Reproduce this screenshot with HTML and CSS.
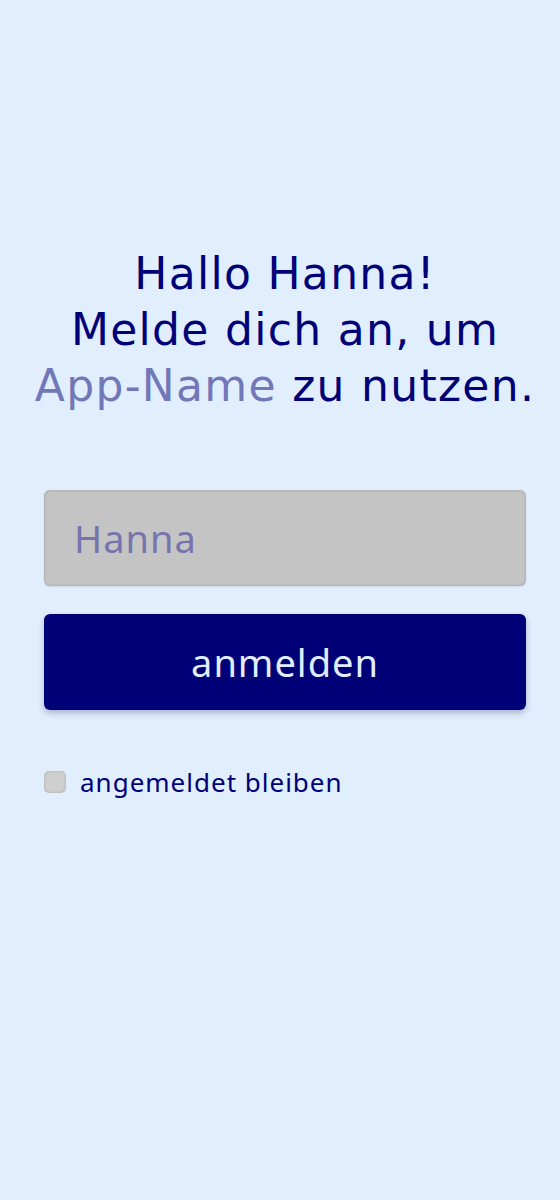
FILE: index.html
```html
<!DOCTYPE html>
<html lang="de">
<head>
<meta charset="utf-8">
<link rel="stylesheet" href="styles.css">
</head>
<body>
<main class="login">
  <h1 class="greeting">Hallo Hanna!<br>Melde dich an, um<br><span class="app">App-Name</span> zu nutzen.</h1>
  <form class="form">
    <input class="name" type="text" placeholder="Hanna">
    <button class="submit" type="button">anmelden</button>
    <label class="remember"><span class="box"></span><span>angemeldet bleiben</span></label>
  </form>
</main>
</body>
</html>
```
FILE: styles.css
```css
html, body {
  margin: 0;
  padding: 0;
  background: #e1eefe;
  height: 100%;
}
body {
  font-family: "Noto Sans", "Open Sans", sans-serif;
  color: #000077;
  letter-spacing: 1px;
}
.login {
  display: flex;
  flex-direction: column;
  padding: 246px 34px 0 44px;
}
.greeting {
  margin: 0 -30px 0 -30px;
  text-align: center;
  font-family: "DejaVu Sans", sans-serif;
  font-weight: 400;
  font-size: 44px;
  letter-spacing: 1.3px;
  line-height: 56px;
  color: #000077;
}
.app {
  color: #7277b8;
}
.form {
  display: flex;
  flex-direction: column;
  margin-top: 76px;
}
.name {
  box-sizing: border-box;
  height: 96px;
  border: none;
  border-radius: 6px;
  background: #c4c4c4;
  box-shadow: inset 0 0 3px rgba(0,0,0,0.2), 0 1px 2px rgba(0,0,0,0.1);
  padding: 0 30px;
  font-family: inherit;
  font-size: 38px;
  letter-spacing: 1px;
  color: #000077;
  outline: none;
}
.name::placeholder {
  color: #7774ad;
}
.submit {
  margin-top: 28px;
  height: 96px;
  border: none;
  border-radius: 6px;
  background: #000077;
  color: #e1eefe;
  font-family: inherit;
  font-size: 38px;
  letter-spacing: 1px;
  box-shadow: 0 3px 6px rgba(0,0,60,0.25);
}
.remember {
  display: flex;
  align-items: center;
  gap: 14px;
  margin-top: 54px;
  font-size: 26px;
  color: #000077;
}
.box {
  width: 22px;
  height: 22px;
  box-sizing: border-box;
  border-radius: 5px;
  background: #cfcfcf;
  box-shadow: inset 0 0 3px rgba(0,0,0,0.2);
}
```
